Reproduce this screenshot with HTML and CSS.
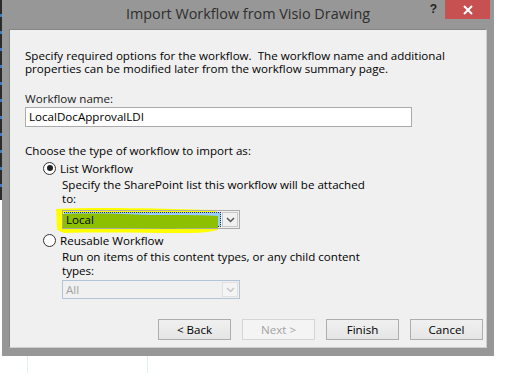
FILE: index.html
```html
<!DOCTYPE html>
<html lang="en">
<head>
  <meta charset="UTF-8">
  <meta name="viewport" content="width=device-width, initial-scale=1.0">
  <title>Import Workflow from Visio Drawing</title>
  <link rel="stylesheet" href="styles.css">
</head>
<body>
  <div class="desktop">
    <div class="backdrop-edge"></div>
    <div class="window">
      <div class="titlebar">
        <span class="title">Import Workflow from Visio Drawing</span>
        <span class="help">?</span>
        <span class="close">
          <svg width="10" height="10" viewBox="0 0 10 10"><path d="M1 1 L9 9 M9 1 L1 9" stroke="#fff" stroke-width="2"/></svg>
        </span>
      </div>

      <div class="panel">
        <p class="intro">Specify required options for the workflow.&nbsp; The workflow name and additional properties can be modified later from the workflow summary page.</p>

        <label class="field-label">Workflow name:</label>
        <div class="textbox">LocalDocApprovalLDI</div>

        <p class="choose">Choose the type of workflow to import as:</p>

        <div class="option">
          <span class="radio checked"></span>
          <span>List Workflow</span>
        </div>
        <div class="sub">
          <p class="hint">Specify the SharePoint list this workflow will be attached to:</p>
          <div class="combo-wrap">
            <svg class="marker yellow" width="170" height="30" viewBox="0 0 170 30">
              <path d="M1 3 C40 1 90 2 161 4 L163 24 C150 27 140 27 128 27 C90 27 50 26 9 27 L2 24 Z" fill="#ffff00"/>
            </svg>
            <div class="combo">
              <span class="selection"><span class="selection-text">Local</span></span>
              <span class="arrow">
                <svg width="9" height="6" viewBox="0 0 9 6"><path d="M1 1 L4.5 4.5 L8 1" stroke="#555" stroke-width="1.5" fill="none"/></svg>
              </span>
            </div>
            <svg class="marker green" width="170" height="30" viewBox="0 0 170 30">
              <path d="M8 8 C40 7 70 8 95 9 C130 9 150 9 163 10 L163 22 C110 23 60 22 8 22 Z" fill="#8cc000"/>
            </svg>
          </div>
        </div>

        <div class="option second">
          <span class="radio"></span>
          <span>Reusable Workflow</span>
        </div>
        <div class="sub">
          <p class="hint">Run on items of this content types, or any child content types:</p>
          <div class="combo disabled">
            <span class="value">All</span>
            <span class="arrow">
              <svg width="9" height="6" viewBox="0 0 9 6"><path d="M1 1 L4.5 4.5 L8 1" stroke="#c4c4c4" stroke-width="1.5" fill="none"/></svg>
            </span>
          </div>
        </div>

        <div class="buttons">
          <button>&lt; Back</button>
          <button disabled>Next &gt;</button>
          <button>Finish</button>
          <button>Cancel</button>
        </div>
      </div>
    </div>
    <div class="below">
      <span class="line"></span>
      <span class="line"></span>
    </div>
  </div>
</body>
</html>
```

FILE: styles.css
```css
body {
  margin: 0;
  background: #fff;
  font-family: "Open Sans", "Noto Sans", sans-serif;
  font-size: 11.6px;
  color: #000;
}

.desktop {
  position: relative;
  width: 526px;
  height: 373px;
  overflow: hidden;
}

.backdrop-edge {
  position: absolute;
  left: 0;
  top: 0;
  width: 2px;
  height: 200px;
  background: repeating-linear-gradient(#2b2b2b 0 14px, #3a7fc4 14px 17px);
}

.window {
  margin-left: 2px;
  width: 492px;
  height: 356px;
  background: #979797;
  box-sizing: border-box;
  padding: 0 7px 8px 7px;
}

.titlebar {
  position: relative;
  height: 29px;
  display: flex;
  justify-content: center;
  align-items: center;
}

.title {
  font-size: 14.4px;
  color: #2e2e2e;
  margin-top: -2px;
}

.help {
  position: absolute;
  right: 50px;
  top: 2px;
  font-family: "Liberation Sans", sans-serif;
  font-weight: bold;
  font-size: 12px;
  color: #222;
}

.close {
  position: absolute;
  right: -3px;
  top: 0;
  width: 45px;
  height: 19px;
  background: #c75050;
  display: flex;
  justify-content: center;
  align-items: center;
}

.panel {
  height: 319px;
  background: #f0f0f0;
  border: 1px solid #858585;
  border-bottom-color: #cfcfcf;
  border-right-color: #cfcfcf;
  box-sizing: border-box;
  padding: 19px 0 0 15px;
}

p {
  margin: 0;
}

.intro {
  line-height: 13px;
  width: 430px;
}

.field-label {
  display: block;
  margin-top: 17px;
  line-height: 14px;
  color: #1a1a1a;
}

.textbox {
  margin-top: 1px;
  width: 387px;
  height: 20px;
  box-sizing: border-box;
  border: 1px solid #ababab;
  background: #fff;
  padding-left: 3px;
  line-height: 18px;
}

.choose {
  margin-top: 17px;
  line-height: 14px;
}

.option {
  display: flex;
  align-items: center;
  gap: 4px;
  margin-left: 18px;
  margin-top: 2px;
  height: 16px;
}

.option.second {
  margin-top: 3px;
}

.radio {
  width: 11px;
  height: 11px;
  border: 1px solid #333;
  border-radius: 50%;
  background: #fff;
  position: relative;
}

.radio.checked::after {
  content: "";
  position: absolute;
  left: 2.5px;
  top: 2.5px;
  width: 6px;
  height: 6px;
  border-radius: 50%;
  background: #222;
}

.sub {
  margin-left: 37px;
  margin-top: 2px;
}

.hint {
  line-height: 14px;
  width: 310px;
}

.combo-wrap {
  position: relative;
  margin-top: 4px;
  width: 178px;
}

.combo {
  position: relative;
  width: 178px;
  height: 19px;
  box-sizing: border-box;
  border: 1px solid #aaaaaa;
  background: #fff;
  display: flex;
  align-items: stretch;
  padding: 1px;
}

.combo-wrap .combo {
  background: transparent;
}

.selection {
  flex: 1;
  background: #99ccff;
  outline: 1px dotted #333;
  outline-offset: -1px;
  padding-left: 2px;
  line-height: 15px;
}

.selection-text {
  position: relative;
  z-index: 2;
}

.arrow {
  width: 16px;
  margin-left: 1px;
  border: 1px solid #c8c8c8;
  box-sizing: border-box;
  background: #f0f0f0;
  display: flex;
  justify-content: center;
  align-items: center;
}

.marker {
  position: absolute;
  left: -7px;
  top: -4px;
  pointer-events: none;
}

.marker.green {
  z-index: 1;
}

.combo.disabled {
  margin-top: 2px;
  border-color: #b4c4d8;
  background: #f0f0f0;
  color: #a3a3a3;
}

.combo.disabled .value {
  flex: 1;
  padding-left: 2px;
  line-height: 15px;
}

.combo.disabled .arrow {
  border-color: #e0e0e0;
  background: #f4f4f4;
}

.buttons {
  display: flex;
  gap: 11px;
  margin-left: 133px;
  margin-top: 20px;
}

button {
  width: 73px;
  height: 21px;
  font-family: inherit;
  font-size: 11.6px;
  color: #000;
  border: 1px solid #adadad;
  background: linear-gradient(#f0f0f0, #e5e5e5);
  padding: 0;
}

button:disabled {
  color: #a3a3a3;
  border-color: #d5d5d5;
  background: #f4f4f4;
}

.below {
  display: flex;
  height: 17px;
}

.line {
  width: 1px;
  background: #e3eef8;
  margin-left: 27px;
}

.line + .line {
  margin-left: 119px;
}
```
